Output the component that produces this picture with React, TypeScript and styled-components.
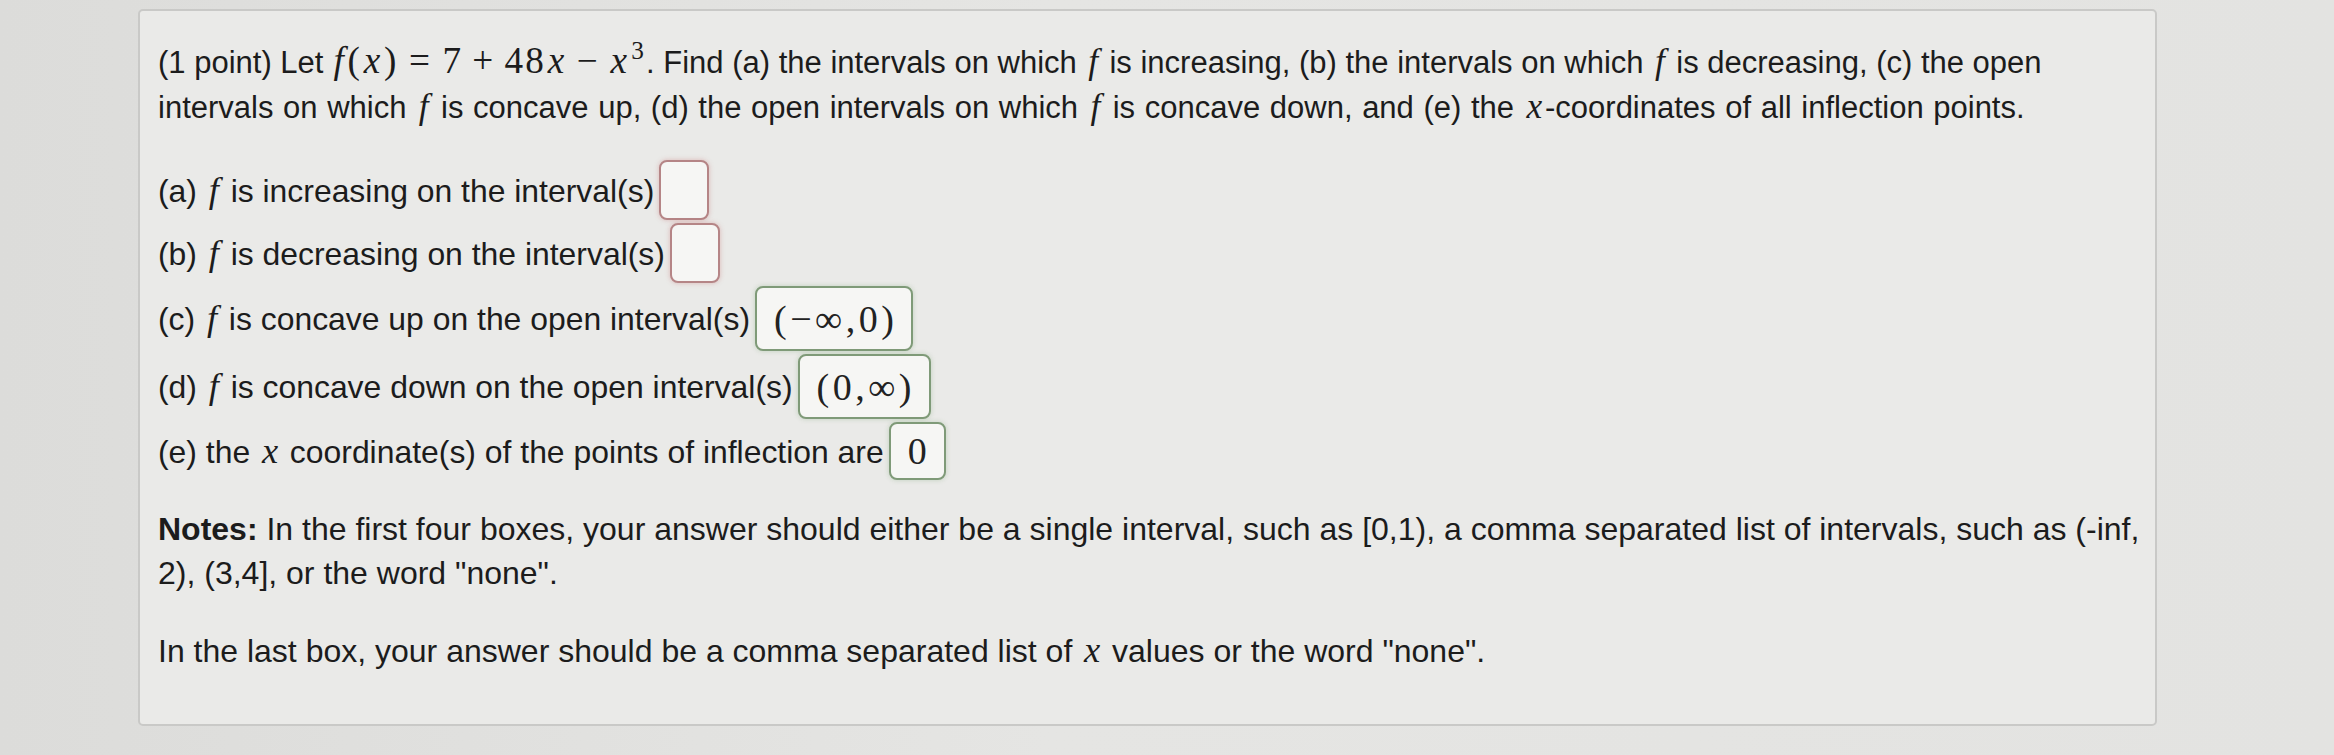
import React from "react";
import styled, { createGlobalStyle } from "styled-components";

const GlobalStyle = createGlobalStyle`
  html, body {
    margin: 0;
    padding: 0;
    background: #e2e2e0;
  }
  body {
    font-family: "Liberation Sans", Arial, Helvetica, sans-serif;
    color: #1c1c1c;
  }
`;

const Page = styled.div`
  width: 2334px;
  height: 755px;
  box-sizing: border-box;
  padding: 9px 177px 0 138px;
  background: linear-gradient(90deg, #dcdcda 0%, #e5e5e3 45%, #e3e3e1 100%);
`;

const Panel = styled.div`
  box-sizing: border-box;
  height: 717px;
  background: #eaeae8;
  border: 2px solid #c9c9c7;
  border-radius: 5px;
  padding: 28px 0 0 18px;
  font-size: 31px;
  line-height: 44px;
`;

// the photo is slightly larger towards the bottom, so each block has its own size
const Paragraph = styled.p<{ $gap?: number; $size?: number }>`
  margin: ${(p) => p.$gap ?? 0}px 0 0;
  font-size: ${(p) => p.$size ?? 31}px;
  white-space: nowrap;
`;

const Line = styled.span<{ $wordSpacing?: number }>`
  word-spacing: ${(p) => p.$wordSpacing ?? 0}px;
`;

const Parts = styled.div`
  display: flex;
  flex-direction: column;
  gap: 3px;
  margin-top: 30px;
  font-size: 31.9px;
`;

const Row = styled.div`
  display: flex;
  align-items: center;
  gap: 5px;
  white-space: nowrap;
`;

const Math = styled.span`
  font-family: "Liberation Serif", "Times New Roman", serif;
  font-size: 1.2em;
  letter-spacing: 0.06em;
`;

const Var = styled.i`
  font-family: "Liberation Serif", "Times New Roman", serif;
  font-style: italic;
  font-size: 1.14em;
  margin: 0 0.08em;
`;

const MathVar = styled.i`
  font-style: italic;
  margin: 0 0.04em;
`;

const Op = styled.span<{ $space?: number }>`
  margin: 0 ${(p) => p.$space ?? 0.28}em;
`;

const Sup = styled.sup`
  font-size: 0.68em;
  vertical-align: 0.55em;
  line-height: 0;
  margin-left: 0.02em;
`;

const AnswerBox = styled.span<{ $state: "blank" | "correct"; $h: number }>`
  box-sizing: border-box;
  display: inline-flex;
  align-items: center;
  justify-content: center;
  min-width: 50px;
  height: ${(p) => p.$h}px;
  padding: 0 14px 0 17px;
  background: #f6f6f4;
  border: 2px solid ${(p) => (p.$state === "blank" ? "#b58586" : "#7f9a78")};
  border-radius: 8px;
  box-shadow: 0 0 5px
    ${(p) => (p.$state === "blank" ? "rgba(190, 90, 90, 0.35)" : "rgba(100, 150, 90, 0.3)")};
  font-family: "Liberation Serif", "Times New Roman", serif;
  font-size: 38px;
  letter-spacing: 3.5px;
  color: #222;
`;

const Bold = styled.b`
  font-weight: 700;
`;

const F = () => <Var>f</Var>;
const X = () => <Var>x</Var>;

const parts: { label: React.ReactNode; state: "blank" | "correct"; h: number; value?: string }[] = [
  { label: <>(a) <F /> is increasing on the interval(s)</>, state: "blank", h: 60 },
  { label: <>(b) <F /> is decreasing on the interval(s)</>, state: "blank", h: 60 },
  { label: <>(c) <F /> is concave up on the open interval(s)</>, state: "correct", h: 65, value: "(\u2212\u221E,0)" },
  { label: <>(d) <F /> is concave down on the open interval(s)</>, state: "correct", h: 65, value: "(0,\u221E)" },
  { label: <>(e) the <X /> coordinate(s) of the points of inflection are</>, state: "correct", h: 58, value: "0" },
];

const App = () => {
  return (
    <Page>
      <GlobalStyle />
      <Panel>
        <Paragraph>
          (1 point) Let{" "}
          <Math>
            <MathVar>f</MathVar>(<MathVar>x</MathVar>)<Op>=</Op>7<Op $space={0.24}>+</Op>48
            <MathVar>x</MathVar>
            <Op $space={0.24}>{"\u2212"}</Op>
            <MathVar>x</MathVar>
            <Sup>3</Sup>
          </Math>
          . Find (a) the intervals on which <F /> is increasing, (b) the intervals on which <F /> is
          decreasing, (c) the open
          <br />
          <Line $wordSpacing={1}>
            intervals on which <F /> is concave up, (d) the open intervals on which <F /> is concave
            down, and (e) the <X />-coordinates of all inflection points.
          </Line>
        </Paragraph>
        <Parts>
          {parts.map((p, i) => (
            <Row key={i}>
              <span>{p.label}</span>
              <AnswerBox $state={p.state} $h={p.h}>
                {p.value}
              </AnswerBox>
            </Row>
          ))}
        </Parts>
        <Paragraph $gap={27} $size={32}>
          <Bold>Notes:</Bold> In the first four boxes, your answer should either be a single interval,
          such as [0,1), a comma separated list of intervals, such as (-inf,
          <br />
          2), (3,4], or the word "none".
        </Paragraph>
        <Paragraph $gap={33} $size={32}>
          In the last box, your answer should be a comma separated list of <X /> values or the word
          "none".
        </Paragraph>
      </Panel>
    </Page>
  );
};

export default App;
